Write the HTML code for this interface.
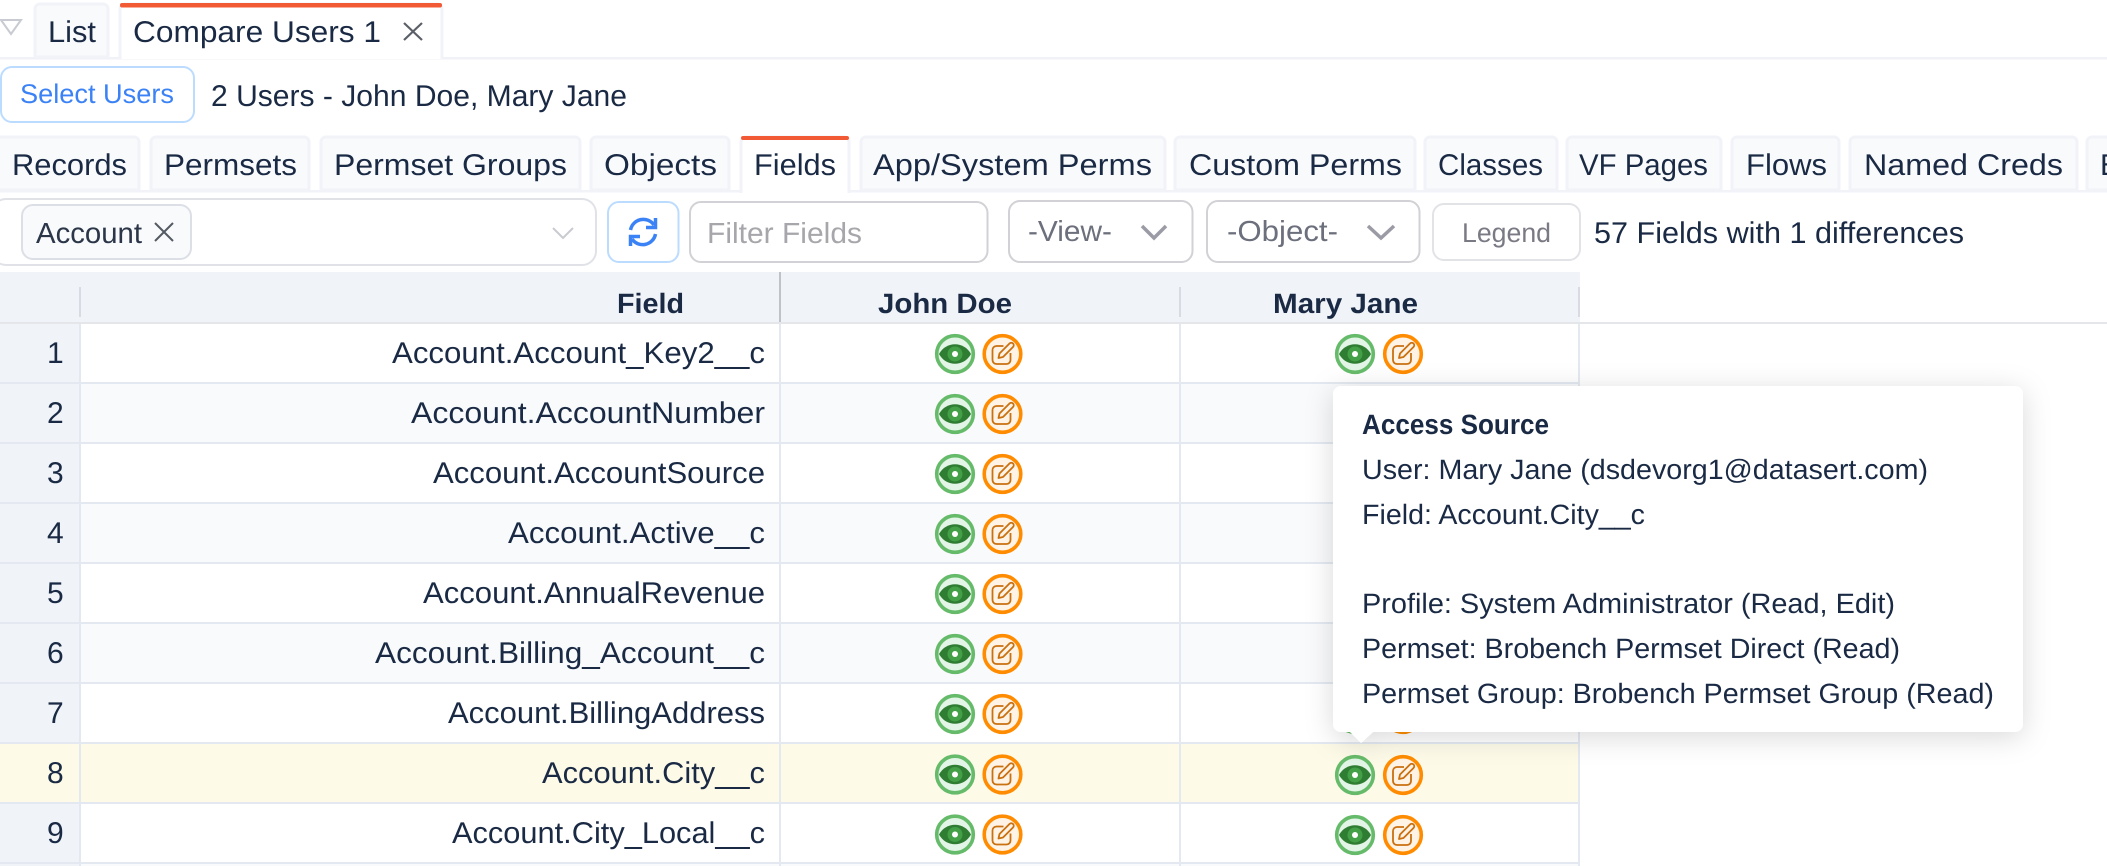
<!DOCTYPE html>
<html lang="en">
<head>
<meta charset="utf-8">
<title>Compare Users</title>
<style>
html,body{margin:0;padding:0;background:#fff;width:2107px;height:866px;overflow:hidden}
svg{display:block}
text{font-family:"Liberation Sans",sans-serif;fill:#1a2a44;font-size:30px;text-rendering:geometricPrecision}
.b{font-weight:bold}
.tab{fill:#f9fafc;stroke:#f1f3f8;stroke-width:3}
.w{fill:#fff;stroke:#f1f3f8;stroke-width:3}
</style>
</head>
<body>
<svg xmlns="http://www.w3.org/2000/svg" width="2107" height="866" viewBox="0 0 2107 866">
<defs>
<g id="eye">
<circle r="18.3" fill="#e3f5e6" stroke="#66bb6a" stroke-width="3.6"/>
<path d="M-16 0C-9 -13 9 -13 16 0C9 13 -9 13 -16 0Z" fill="#2e7d32"/>
<circle r="7.5" fill="#43a047"/>
<circle r="3" fill="#fff"/>
</g>
<g id="edit">
<circle r="18.3" fill="#fff3e6" stroke="#ff8c00" stroke-width="3.6"/>
<path d="M1 -8H-6A4 4 0 0 0 -10 -4V6A4 4 0 0 0 -6 10H4A4 4 0 0 0 8 6V-1" fill="none" stroke="#c9700f" stroke-width="1.8"/>
<path d="M-4 4L-3 -.5L7 -10.5A2.1 2.1 0 0 1 10.5 -7L.5 3Z" fill="none" stroke="#c9700f" stroke-width="1.8" stroke-linejoin="round"/>
</g>
<filter id="sh" x="-15%" y="-20%" width="130%" height="140%">
<feDropShadow dx="0" dy="5" stdDeviation="14" flood-color="#000" flood-opacity=".15"/>
</filter>
</defs>

<rect width="2107" height="866" fill="#fff"/>

<!-- top tabs -->
<rect x="0" y="57" width="2107" height="2.5" fill="#f1f2f7"/>
<path d="M1 20H21L11 34Z" fill="none" stroke="#c8cbd2" stroke-width="2"/>
<path d="M35 57V9a5 5 0 0 1 5 -5H103a5 5 0 0 1 5 5V57Z" class="tab"/>
<path d="M120 59V9a5 5 0 0 1 5 -5H437a5 5 0 0 1 5 5V59" class="w"/>
<rect x="120" y="3" width="322" height="4.5" rx="2" fill="#f15a35"/>
<text x="48" y="42" textLength="48" lengthAdjust="spacingAndGlyphs">List</text>
<text x="133" y="42" textLength="248" lengthAdjust="spacingAndGlyphs">Compare Users 1</text>
<path d="M404 23L422 40M422 23L404 40" stroke="#5b5f68" stroke-width="2.2" fill="none"/>

<!-- select users -->
<rect x="1" y="67" width="193" height="55" rx="11" fill="#fff" stroke="#bcdcff" stroke-width="2"/>
<text x="20" y="103" textLength="154" lengthAdjust="spacingAndGlyphs" style="fill:#3b82f6;font-size:27px">Select Users</text>
<text x="211" y="106" textLength="416" lengthAdjust="spacingAndGlyphs">2 Users - John Doe, Mary Jane</text>

<!-- sub tabs -->
<rect x="0" y="190" width="2107" height="2.5" fill="#f1f3f8"/>
<path d="M-5 190V142a5 5 0 0 1 5 -5H134a5 5 0 0 1 5 5V190Z" class="tab"/>
<path d="M151 190V142a5 5 0 0 1 5 -5H304a5 5 0 0 1 5 5V190Z" class="tab"/>
<path d="M321 190V142a5 5 0 0 1 5 -5H575a5 5 0 0 1 5 5V190Z" class="tab"/>
<path d="M591 190V142a5 5 0 0 1 5 -5H724a5 5 0 0 1 5 5V190Z" class="tab"/>
<path d="M741 193V142a5 5 0 0 1 5 -5H844a5 5 0 0 1 5 5V193" class="w"/>
<rect x="741" y="136" width="108" height="4" rx="2" fill="#f15a35"/>
<path d="M861 190V142a5 5 0 0 1 5 -5H1160a5 5 0 0 1 5 5V190Z" class="tab"/>
<path d="M1175 190V142a5 5 0 0 1 5 -5H1410a5 5 0 0 1 5 5V190Z" class="tab"/>
<path d="M1425 190V142a5 5 0 0 1 5 -5H1552a5 5 0 0 1 5 5V190Z" class="tab"/>
<path d="M1567 190V142a5 5 0 0 1 5 -5H1716a5 5 0 0 1 5 5V190Z" class="tab"/>
<path d="M1732 190V142a5 5 0 0 1 5 -5H1834a5 5 0 0 1 5 5V190Z" class="tab"/>
<path d="M1850 190V142a5 5 0 0 1 5 -5H2072a5 5 0 0 1 5 5V190Z" class="tab"/>
<path d="M2087 190V142a5 5 0 0 1 5 -5H2115V190Z" class="tab"/>
<text x="12" y="175" textLength="115" lengthAdjust="spacingAndGlyphs">Records</text>
<text x="164" y="175" textLength="133" lengthAdjust="spacingAndGlyphs">Permsets</text>
<text x="334" y="175" textLength="233" lengthAdjust="spacingAndGlyphs">Permset Groups</text>
<text x="604" y="175" textLength="113" lengthAdjust="spacingAndGlyphs">Objects</text>
<text x="754" y="175" textLength="82" lengthAdjust="spacingAndGlyphs">Fields</text>
<text x="873" y="175" textLength="279" lengthAdjust="spacingAndGlyphs">App/System Perms</text>
<text x="1189" y="175" textLength="213" lengthAdjust="spacingAndGlyphs">Custom Perms</text>
<text x="1438" y="175" textLength="105" lengthAdjust="spacingAndGlyphs">Classes</text>
<text x="1579" y="175" textLength="129" lengthAdjust="spacingAndGlyphs">VF Pages</text>
<text x="1746" y="175" textLength="81" lengthAdjust="spacingAndGlyphs">Flows</text>
<text x="1864" y="175" textLength="199" lengthAdjust="spacingAndGlyphs">Named Creds</text>
<text x="2100" y="175">E</text>

<!-- filter row -->
<rect x="-8" y="199" width="604" height="66" rx="14" fill="#fff" stroke="#e0e2e8" stroke-width="2"/>
<rect x="22" y="205" width="169" height="54" rx="11" fill="#f9fafc" stroke="#dcdfe6" stroke-width="2"/>
<text x="36" y="243" textLength="106" lengthAdjust="spacingAndGlyphs" style="font-size:29px;fill:#2b3648">Account</text>
<path d="M155 223L173 241M173 223L155 241" stroke="#555a63" stroke-width="2" fill="none"/>
<path d="M553 228L563 238L573 228" stroke="#c9cbd0" stroke-width="2" fill="none"/>

<rect x="608" y="202" width="70.5" height="60" rx="11" fill="#fff" stroke="#bcdcff" stroke-width="2"/>
<g fill="none" stroke="#3b82f6" stroke-width="3.5">
<path d="M630.5 230A13 13 0 0 1 654 225"/>
<path d="M655.5 218V227.5H646"/>
<path d="M655.5 234A13 13 0 0 1 632 239"/>
<path d="M630.5 246V236.5H640"/>
</g>

<rect x="690" y="202" width="297.5" height="60" rx="11" fill="#fff" stroke="#d2d2d6" stroke-width="2"/>
<text x="707" y="243" textLength="155" lengthAdjust="spacingAndGlyphs" style="font-size:29px;fill:#a6a6ab">Filter Fields</text>

<rect x="1009" y="201" width="183.5" height="61" rx="11" fill="#fff" stroke="#d2d2d6" stroke-width="2"/>
<text x="1028" y="241" textLength="84" lengthAdjust="spacingAndGlyphs" style="font-size:29px;fill:#6c6f7c">-View-</text>
<path d="M1142 226L1154 238L1166 226" stroke="#9b9ba6" stroke-width="3.5" fill="none"/>

<rect x="1207" y="201" width="212.5" height="61" rx="11" fill="#fff" stroke="#d2d2d6" stroke-width="2"/>
<text x="1227" y="241" textLength="111" lengthAdjust="spacingAndGlyphs" style="font-size:29px;fill:#6c6f7c">-Object-</text>
<path d="M1368 226L1381 238L1394 226" stroke="#9b9ba6" stroke-width="3.5" fill="none"/>

<rect x="1433" y="204" width="147" height="56" rx="11" fill="#fff" stroke="#e2e3e7" stroke-width="2"/>
<text x="1462" y="242" textLength="89" lengthAdjust="spacingAndGlyphs" style="font-size:27px;fill:#7a7a84">Legend</text>
<text x="1594" y="243" textLength="370" lengthAdjust="spacingAndGlyphs">57 Fields with 1 differences</text>

<!-- table header -->
<rect x="0" y="272" width="1580" height="50" fill="#f0f3f8"/>
<rect x="0" y="322" width="2107" height="2" fill="#e5e6ea"/>
<rect x="79" y="287" width="2" height="30" fill="#d8dbe3"/>
<rect x="779" y="272" width="2" height="50" fill="#bfc2c9"/>
<rect x="1179" y="287" width="2" height="30" fill="#d8dbe3"/>
<rect x="1578" y="287" width="2" height="30" fill="#d8dbe3"/>
<text class="b" x="617" y="313" textLength="67" lengthAdjust="spacingAndGlyphs" style="font-size:28px">Field</text>
<text class="b" x="878" y="313" textLength="134" lengthAdjust="spacingAndGlyphs" style="font-size:28px">John Doe</text>
<text class="b" x="1273" y="313" textLength="145" lengthAdjust="spacingAndGlyphs" style="font-size:28px">Mary Jane</text>

<!-- rows -->
<rect x="0" y="324" width="81" height="542" fill="#f0f3f8"/>
<rect x="81" y="384" width="1499" height="58" fill="#f9fafc"/>
<rect x="81" y="504" width="1499" height="58" fill="#f9fafc"/>
<rect x="81" y="624" width="1499" height="58" fill="#f9fafc"/>
<rect x="0" y="744" width="1580" height="58" fill="#fdfae8"/>
<rect x="81" y="864" width="1499" height="2" fill="#f9fafc"/>

<g fill="#e4e9f1">
<rect x="0" y="382" width="1580" height="2"/>
<rect x="0" y="442" width="1580" height="2"/>
<rect x="0" y="502" width="1580" height="2"/>
<rect x="0" y="562" width="1580" height="2"/>
<rect x="0" y="622" width="1580" height="2"/>
<rect x="0" y="682" width="1580" height="2"/>
<rect x="0" y="742" width="1580" height="2"/>
<rect x="0" y="802" width="1580" height="2"/>
<rect x="0" y="862" width="1580" height="2"/>
<rect x="79" y="324" width="2" height="542"/>
<rect x="779" y="324" width="2" height="542"/>
<rect x="1179" y="324" width="2" height="542"/>
<rect x="1578" y="324" width="2" height="542"/>
</g>

<text x="47" y="363">1</text>
<text x="47" y="423">2</text>
<text x="47" y="483">3</text>
<text x="47" y="543">4</text>
<text x="47" y="603">5</text>
<text x="47" y="663">6</text>
<text x="47" y="723">7</text>
<text x="47" y="783">8</text>
<text x="47" y="843">9</text>

<text x="392" y="363" textLength="373" lengthAdjust="spacingAndGlyphs">Account.Account_Key2__c</text>
<text x="411" y="423" textLength="354" lengthAdjust="spacingAndGlyphs">Account.AccountNumber</text>
<text x="433" y="483" textLength="332" lengthAdjust="spacingAndGlyphs">Account.AccountSource</text>
<text x="508" y="543" textLength="257" lengthAdjust="spacingAndGlyphs">Account.Active__c</text>
<text x="423" y="603" textLength="342" lengthAdjust="spacingAndGlyphs">Account.AnnualRevenue</text>
<text x="375" y="663" textLength="390" lengthAdjust="spacingAndGlyphs">Account.Billing_Account__c</text>
<text x="448" y="723" textLength="317" lengthAdjust="spacingAndGlyphs">Account.BillingAddress</text>
<text x="542" y="783" textLength="223" lengthAdjust="spacingAndGlyphs">Account.City__c</text>
<text x="452" y="843" textLength="313" lengthAdjust="spacingAndGlyphs">Account.City_Local__c</text>

<use href="#eye" x="955" y="354"/><use href="#edit" x="1002.5" y="354"/>
<use href="#eye" x="955" y="414"/><use href="#edit" x="1002.5" y="414"/>
<use href="#eye" x="955" y="474"/><use href="#edit" x="1002.5" y="474"/>
<use href="#eye" x="955" y="534"/><use href="#edit" x="1002.5" y="534"/>
<use href="#eye" x="955" y="594"/><use href="#edit" x="1002.5" y="594"/>
<use href="#eye" x="955" y="654"/><use href="#edit" x="1002.5" y="654"/>
<use href="#eye" x="955" y="714"/><use href="#edit" x="1002.5" y="714"/>
<use href="#eye" x="955" y="774.5"/><use href="#edit" x="1002.5" y="774.5"/>
<use href="#eye" x="955" y="834.5"/><use href="#edit" x="1002.5" y="834.5"/>

<use href="#eye" x="1355" y="354"/><use href="#edit" x="1403" y="354"/>
<use href="#eye" x="1355" y="714"/><use href="#edit" x="1403" y="714"/>
<use href="#eye" x="1355" y="775"/><use href="#edit" x="1403" y="775"/>
<use href="#eye" x="1355" y="835"/><use href="#edit" x="1403" y="835"/>

<!-- tooltip -->
<path d="M1341 386H2015a8 8 0 0 1 8 8V724a8 8 0 0 1 -8 8H1373L1361 743L1350 732H1341a8 8 0 0 1 -8 -8V394a8 8 0 0 1 8 -8Z" fill="#fff" filter="url(#sh)"/>
<text class="b" x="1362" y="434" textLength="187" lengthAdjust="spacingAndGlyphs" style="font-size:28px">Access Source</text>
<text x="1362" y="479" textLength="566" lengthAdjust="spacingAndGlyphs" style="font-size:28px">User: Mary Jane (dsdevorg1@datasert.com)</text>
<text x="1362" y="524" textLength="283" lengthAdjust="spacingAndGlyphs" style="font-size:28px">Field: Account.City__c</text>
<text x="1362" y="613" textLength="533" lengthAdjust="spacingAndGlyphs" style="font-size:28px">Profile: System Administrator (Read, Edit)</text>
<text x="1362" y="658" textLength="538" lengthAdjust="spacingAndGlyphs" style="font-size:28px">Permset: Brobench Permset Direct (Read)</text>
<text x="1362" y="703" textLength="632" lengthAdjust="spacingAndGlyphs" style="font-size:28px">Permset Group: Brobench Permset Group (Read)</text>
</svg>
</body>
</html>
